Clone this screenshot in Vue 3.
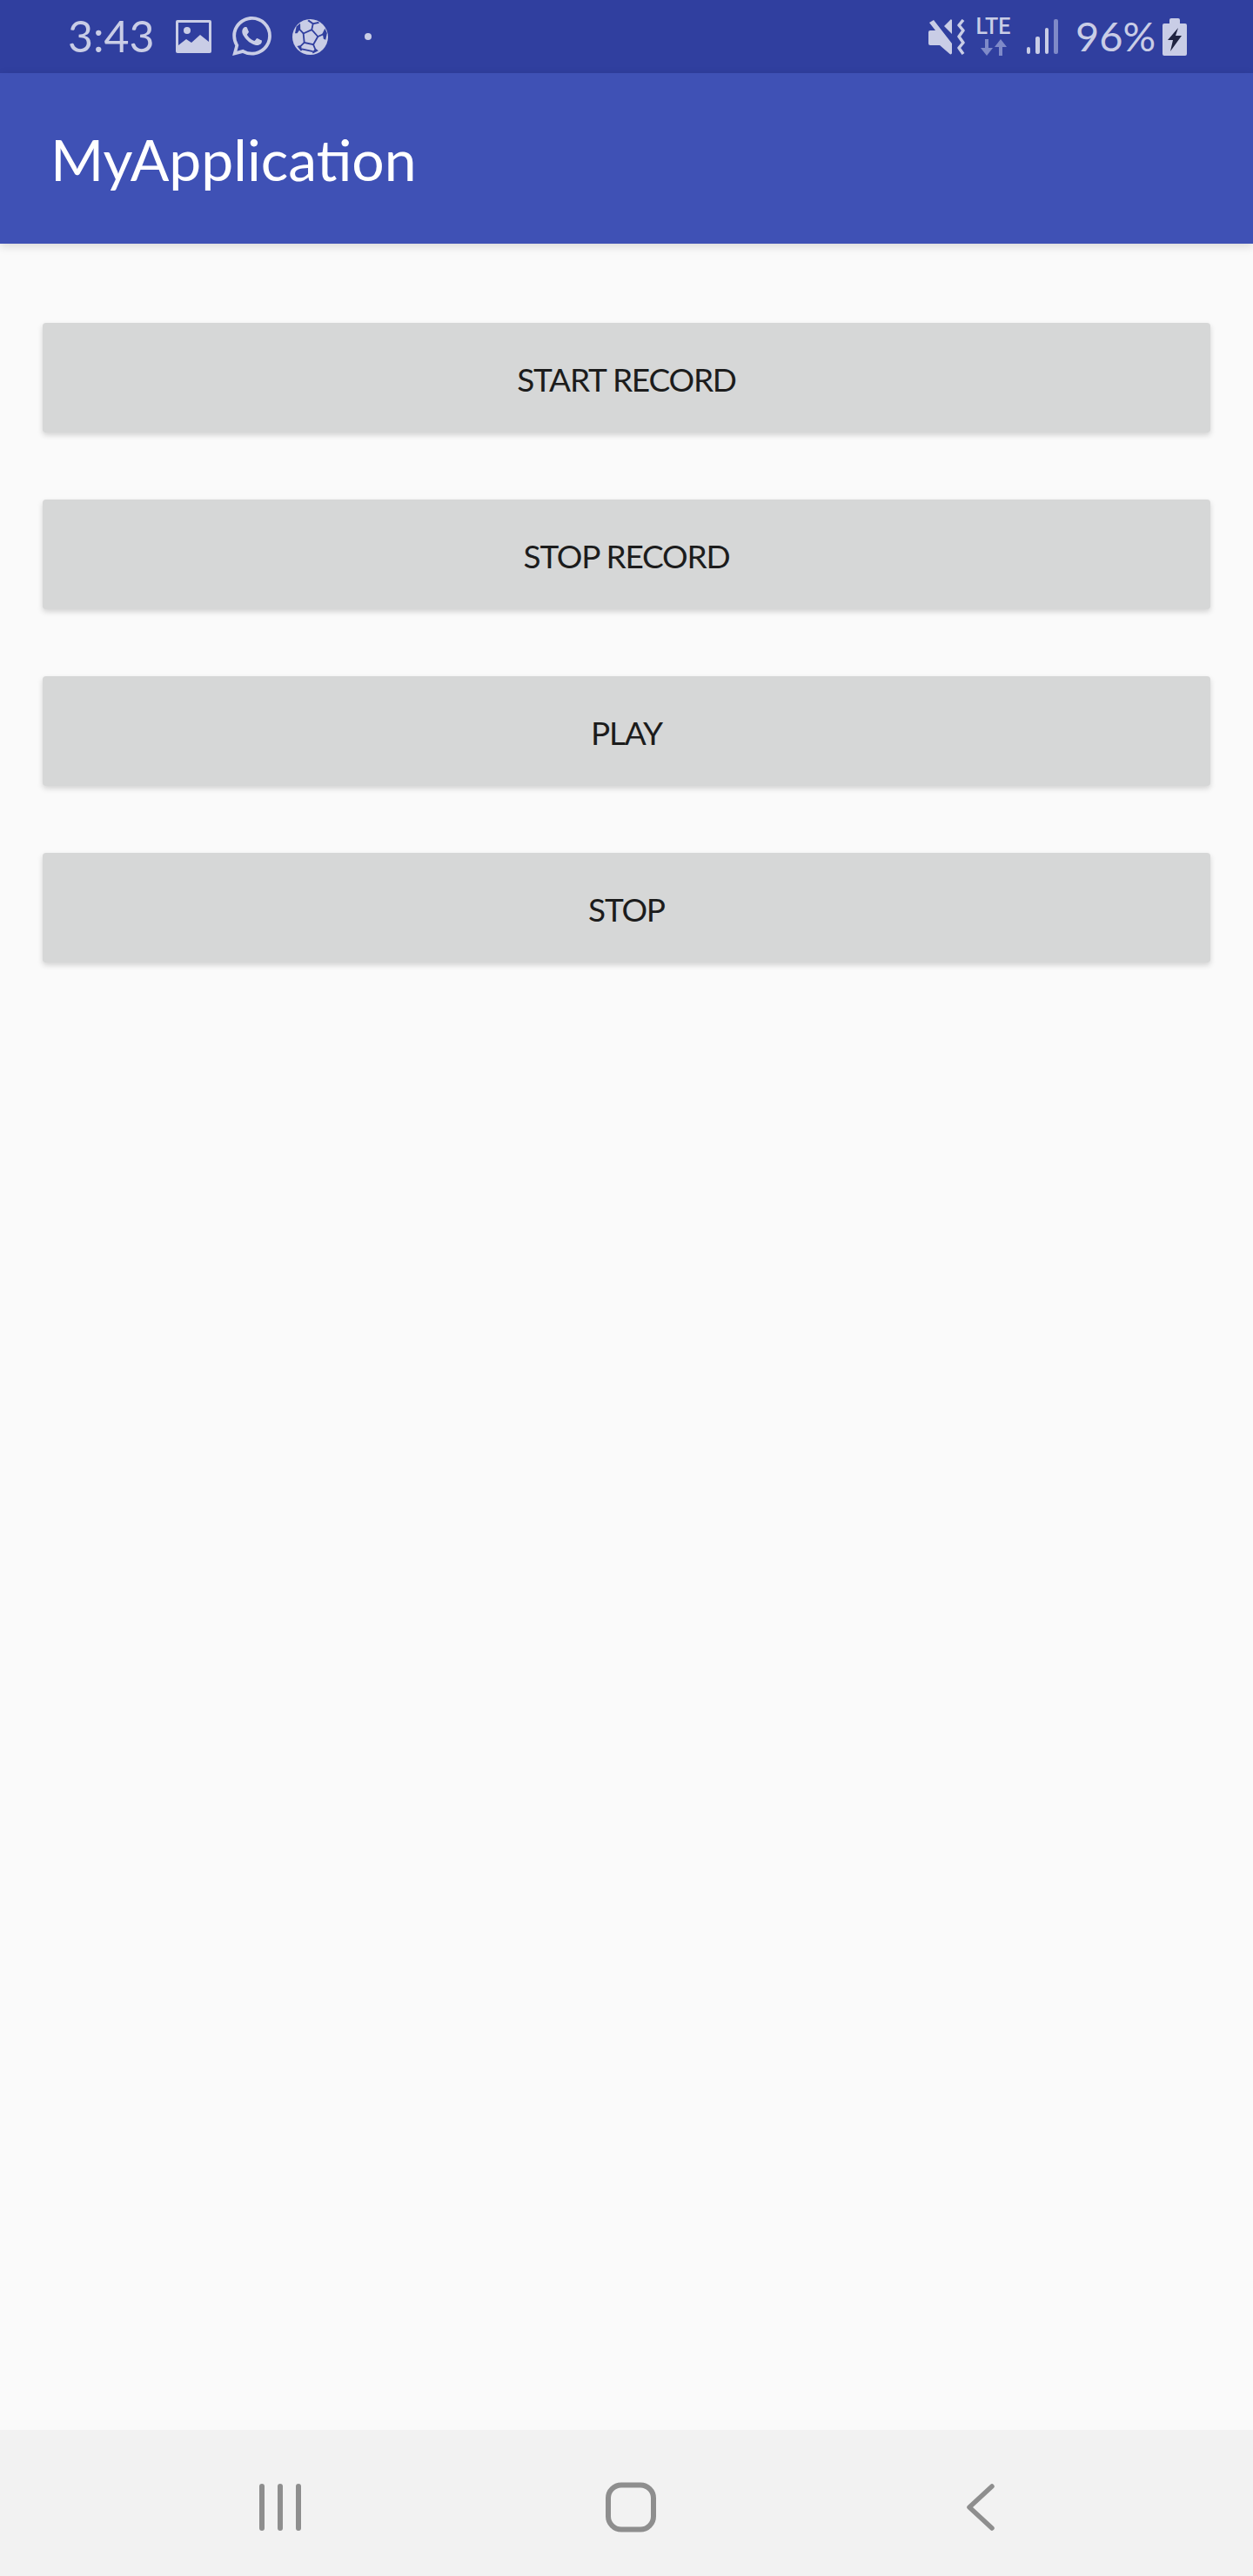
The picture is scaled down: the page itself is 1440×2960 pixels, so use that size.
<script setup>
const buttons = ['START RECORD', 'STOP RECORD', 'PLAY', 'STOP']
</script>

<template>
  <div class="screen">
    <div class="status-bar">
      <span class="time">3:43</span>
      <svg class="ic-image" width="41" height="38" viewBox="0 0 41 38">
        <rect width="41" height="38" rx="2" fill="#c9cde6" />
        <rect x="3" y="3" width="35" height="32" fill="#303f9f" />
        <circle cx="13" cy="12" r="4" fill="#c9cde6" />
        <path d="M3 29l9-7 6 4 10-9 10 8v10H3z" fill="#c9cde6" />
      </svg>
      <svg class="ic-whatsapp" width="45" height="45" viewBox="0 0 24 24" fill="#c9cde6">
        <path d="M17.472 14.382c-.297-.149-1.758-.867-2.03-.967-.273-.099-.471-.148-.67.15-.197.297-.767.966-.94 1.164-.173.199-.347.223-.644.075-.297-.15-1.255-.463-2.39-1.475-.883-.788-1.48-1.761-1.653-2.059-.173-.297-.018-.458.13-.606.134-.133.298-.347.446-.52.149-.174.198-.298.298-.497.099-.198.05-.371-.025-.52-.075-.149-.669-1.612-.916-2.207-.242-.579-.487-.5-.669-.51-.173-.008-.371-.01-.57-.01-.198 0-.52.074-.792.372-.272.297-1.04 1.016-1.04 2.479 0 1.462 1.065 2.875 1.213 3.074.149.198 2.096 3.2 5.077 4.487.709.306 1.262.489 1.694.625.712.227 1.36.195 1.871.118.571-.085 1.758-.719 2.006-1.413.248-.694.248-1.289.173-1.413-.074-.124-.272-.198-.57-.347m-5.421 7.403h-.004a9.87 9.87 0 01-5.031-1.378l-.361-.214-3.741.982.998-3.648-.235-.374a9.86 9.86 0 01-1.51-5.26c.001-5.45 4.436-9.884 9.888-9.884 2.64 0 5.122 1.03 6.988 2.898a9.825 9.825 0 012.893 6.994c-.003 5.45-4.437 9.884-9.885 9.884m8.413-18.297A11.815 11.815 0 0012.05 0C5.495 0 .16 5.335.157 11.892c0 2.096.547 4.142 1.588 5.945L.057 24l6.305-1.654a11.882 11.882 0 005.683 1.448h.005c6.554 0 11.89-5.335 11.893-11.893a11.821 11.821 0 00-3.48-8.413z" />
      </svg>
      <svg class="ic-ball" width="41" height="41" viewBox="0 0 41 41">
        <circle cx="20.5" cy="20.5" r="20.5" fill="#c9cde6" />
        <g transform="rotate(12 20.5 20.5)">
          <g fill="#303f9f">
            <path d="M15 1.500l5.500 2.500 5.500-2.500 1.500 1.500-7 3-7-3z" />
            <path d="M2.500 12l3.500-4.500 1.500 6-2.500 6-2.500.5z" />
            <path d="M38.500 12l-3.500-4.500-1.500 6 2.500 6 2.500.5z" />
            <path d="M8 34l4-2 2.500 5-1 1.500z" />
            <path d="M33 34l-4-2-2.500 5 1 1.500z" />
          </g>
          <g stroke="#303f9f" stroke-width="1.8" fill="none">
            <path d="M20.500 5v7M20.500 12l8.500 6.200-3.200 10H15.200l-3.200-10z" />
            <path d="M12 18.200L6 14M29 18.200l6-4.200M15.200 28.200L12 33M25.800 28.200L29 33M14 36h13" />
          </g>
        </g>
      </svg>
      <span class="dot"></span>

      <svg class="ic-mute" width="42" height="41" viewBox="0 0 42 41">
        <path d="M1 4l5-3 21 27v11a1.500 1.500 0 0 1-2.500 1L13 30H2a2 2 0 0 1-2-2V15a2 2 0 0 1 2-2h6z" fill="#c9cde6" />
        <path d="M18 8l7-7a1 1 0 0 1 2 1v15z" fill="#c9cde6" />
        <path d="M40 1l-5 6 5 6-5 7 5 7-5 6 5 7" fill="none" stroke="#c9cde6" stroke-width="3.500" stroke-linejoin="round" />
      </svg>
      <div class="lte">
        <span class="lte-text">LTE</span>
        <svg width="32" height="19" viewBox="0 0 32 19" fill="#7f8ac8">
          <path d="M6 0h4v10h5l-7 9-7-9h5z" />
          <path d="M24 0l7 9h-5v10h-4V9h-5z" />
        </svg>
      </div>
      <svg class="ic-signal" width="36" height="40" viewBox="0 0 36 40">
        <rect x="0" y="32" width="4" height="8" rx="2" fill="#c9cde6" />
        <rect x="10" y="20" width="5" height="20" rx="2" fill="#c9cde6" />
        <rect x="21" y="10" width="4" height="30" rx="2" fill="#c9cde6" />
        <rect x="31" y="0" width="5" height="40" rx="2" fill="#7f8ac8" />
      </svg>
      <span class="battery-pct">96%</span>
      <svg class="ic-battery" width="28" height="43" viewBox="0 0 28 43">
        <path d="M8 2a2 2 0 0 1 2-2h8a2 2 0 0 1 2 2v4h6a2 2 0 0 1 2 2v33a2 2 0 0 1-2 2H2a2 2 0 0 1-2-2V8a2 2 0 0 1 2-2h6z" fill="#c9cde6" />
        <path d="M18 11L6 25h6l-3 13 13-18h-7z" fill="#1f2340" />
      </svg>
    </div>

    <header class="app-bar">MyApplication</header>

    <main class="content">
      <button v-for="label in buttons" :key="label" class="action-btn" type="button">
        {{ label }}
      </button>
    </main>

    <nav class="nav-bar">
      <svg class="nav-recent" width="50" height="54" viewBox="0 0 50 54" fill="#8e8e8e">
        <rect x="0" y="0" width="6" height="54" rx="3" />
        <rect x="21" y="0" width="6" height="54" rx="3" />
        <rect x="42" y="0" width="6" height="54" rx="3" />
      </svg>
      <svg class="nav-home" width="58" height="58" viewBox="0 0 58 58">
        <rect x="3" y="3.500" width="52" height="51" rx="15" fill="none" stroke="#8e8e8e" stroke-width="6" />
      </svg>
      <svg class="nav-back" width="34" height="54" viewBox="0 0 34 54">
        <path d="M30 3L4 27l26 24" fill="none" stroke="#8e8e8e" stroke-width="5.500" stroke-linecap="round" stroke-linejoin="round" />
      </svg>
    </nav>
  </div>
</template>

<style scoped>
.screen {
  display: flex;
  flex-direction: column;
  width: 1440px;
  height: 2960px;
  background: #fafafa;
  font-family: "Liberation Sans", sans-serif;
  overflow: hidden;
}

.status-bar {
  display: flex;
  align-items: center;
  flex-shrink: 0;
  height: 84px;
  padding-left: 78px;
  box-sizing: border-box;
  background: #303f9f;
  color: #c9cde6;
}

.time {
  width: 96px;
  margin-top: -2px;
  font-family: "Lato", sans-serif;
  font-size: 50px;
  line-height: 1;
  font-weight: 400;
  white-space: nowrap;
}

.ic-image { margin-left: 28px; }
.ic-whatsapp { margin-left: 24px; margin-top: -1px; }
.ic-ball { margin-left: 24px; }

.dot {
  width: 8px;
  height: 8px;
  margin-left: 42px;
  border-radius: 50%;
  background: #c9cde6;
}

.ic-mute { margin-left: 640px; }

.lte {
  display: flex;
  flex-direction: column;
  align-items: center;
  gap: 4px;
  width: 41px;
  margin-left: 12px;
}

.lte-text {
  font-family: "Roboto", sans-serif;
  font-size: 25px;
  font-weight: 500;
  line-height: 20px;
}

.ic-signal { margin-left: 18px; }

.battery-pct {
  margin-left: 20px;
  width: 89px;
  margin-top: -1px;
  font-family: "Lato", sans-serif;
  font-size: 47px;
  font-weight: 400;
  line-height: 1;
  white-space: nowrap;
}

.ic-battery { margin-left: 11px; }

.app-bar {
  position: relative;
  z-index: 1;
  flex-shrink: 0;
  display: flex;
  align-items: center;
  height: 196px;
  padding-left: 58px;
  box-sizing: border-box;
  background: #3f51b5;
  color: #fff;
  font-family: "Lato", sans-serif;
  font-size: 66px;
  box-shadow: 0 3px 10px rgba(0, 0, 0, 0.14);
}

.content {
  flex: 1;
  display: flex;
  flex-direction: column;
  gap: 77px;
  padding: 91px 49px 0;
}

.action-btn {
  height: 126px;
  padding: 2px 0 0;
  border: none;
  border-radius: 4px;
  background: #d6d7d7;
  color: #1c1c1c;
  font-family: "Lato", sans-serif;
  font-size: 37px;
  letter-spacing: -1.2px;
  box-shadow: 0 3px 6px rgba(0, 0, 0, 0.16);
}

.nav-bar {
  display: flex;
  flex-shrink: 0;
  height: 168px;
  padding-top: 60px;
  padding-left: 298px;
  box-sizing: border-box;
  align-items: flex-start;
  background: #f2f2f2;
}

.nav-recent { margin-top: 2px; }
.nav-home { margin-left: 348px; }
.nav-back { margin-left: 356px; margin-top: 2px; }
</style>

<style>
html, body { margin: 0; padding: 0; background: #fafafa; }
</style>
